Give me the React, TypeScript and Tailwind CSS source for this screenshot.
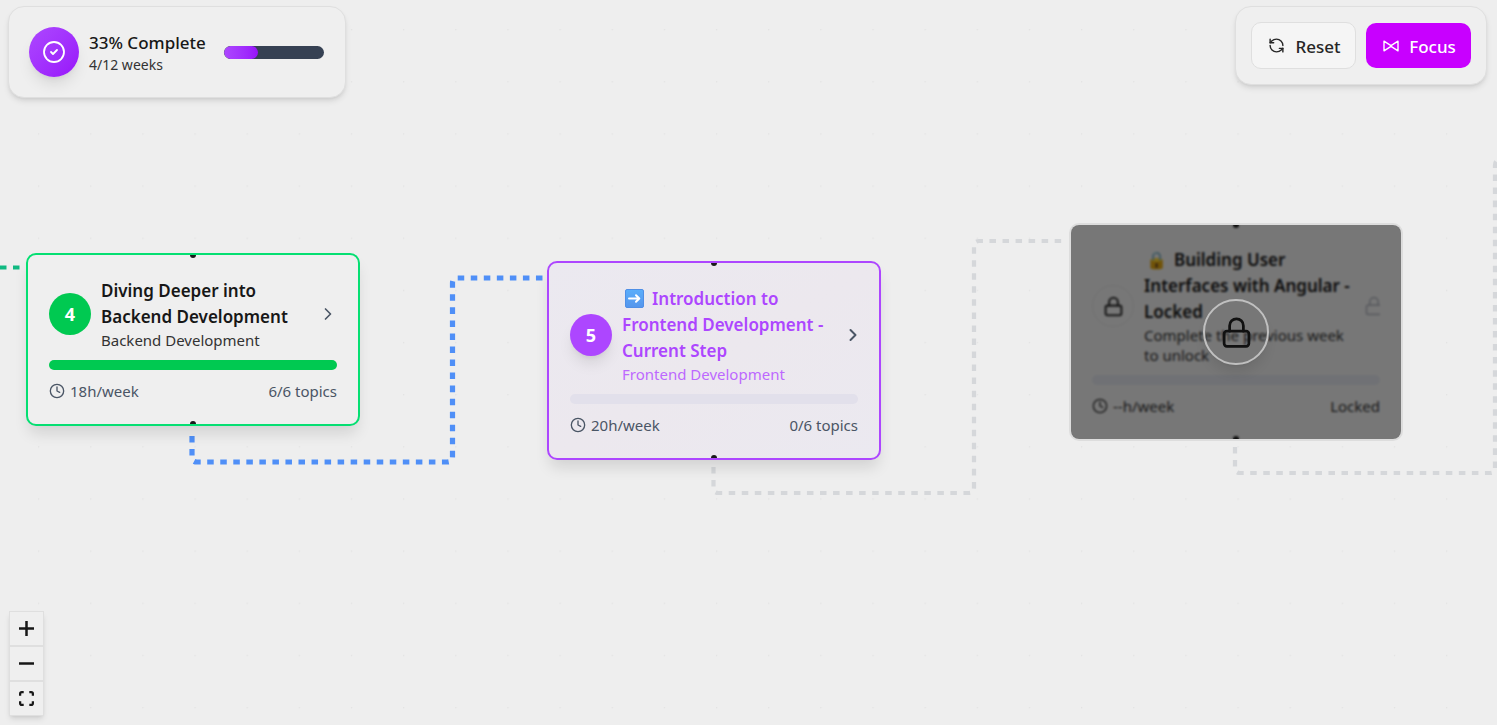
import React from "react";
import { ChevronRight, CircleCheck, Clock, Lock, RefreshCcw } from "lucide-react";

type CardProps = {
  place: string;
  frame: string;
  badge: React.ReactNode;
  title: React.ReactNode;
  titleColor: string;
  subtitle: string;
  subtitleColor: string;
  bar: string;
  hours: string;
  topics: string;
  metaColor: string;
  action: React.ReactNode;
  overlay?: React.ReactNode;
};

function Handle({ side }: { side: string }) {
  return <span className={`absolute left-1/2 h-[3px] w-1.5 -translate-x-1/2 bg-[#1a1a1a] ${side}`} />;
}

function WeekCard(p: CardProps) {
  return (
    <article className={`absolute w-[334px] rounded-[10px] border-2 px-[21px] pb-[23px] ${p.place} ${p.frame}`}>
      <Handle side="top-0 rounded-b-full" />
      <div className="flex items-center gap-2.5">
        {p.badge}
        <div className="min-w-0 flex-1">
          <h2 className={`text-[17px] leading-[26px] font-semibold ${p.titleColor}`}>{p.title}</h2>
          <p className={`text-[15px] leading-5 ${p.subtitleColor}`}>{p.subtitle}</p>
        </div>
        {p.action}
      </div>
      <div className={`mt-2.5 h-2.5 rounded-full ${p.bar}`} />
      <div className={`mt-[11px] flex items-center justify-between text-[15px] leading-5 ${p.metaColor}`}>
        <span className="flex items-center gap-[5px]">
          <Clock size={16} strokeWidth={2} />
          {p.hours}
        </span>
        <span>{p.topics}</span>
      </div>
      <Handle side="bottom-0 rounded-t-full" />
      {p.overlay}
    </article>
  );
}

function Canvas() {
  return (
    <svg className="absolute inset-0 h-full w-full" fill="none" aria-hidden="true">
      <defs>
        <pattern id="dots" x="38" y="29" width="52.15" height="52.15" patternUnits="userSpaceOnUse">
          <circle cx="0.7" cy="0.7" r="0.7" fill="#e0e0e0" />
        </pattern>
      </defs>
      <rect width="100%" height="100%" fill="url(#dots)" />
      <path d="M0 267.5H26" stroke="#10b981" strokeWidth="4.2" strokeDasharray="6.5 6.5" />
      <path
        d="M192 436V457Q192 462 197 462H447Q452.5 462 452.5 457V283Q452.5 278 457 278H548"
        stroke="#4f8ff7" strokeWidth="5.2" strokeDasharray="6.52 6.52"
      />
      <g stroke="#d5d7da" strokeWidth="4.2" strokeDasharray="6.52 6.52">
        <path d="M713.5 467V488Q713.5 493 718.5 493H969Q974 493 974 488V246Q974 241 979 241H1065" />
        <path d="M1235 447V468Q1235 473 1240 473H1490Q1495 473 1495 468V165Q1495 160 1500 160H1560" />
      </g>
    </svg>
  );
}

function FocusIcon() {
  return (
    <svg width="16" height="16" viewBox="0 0 16 16" fill="none" stroke="currentColor" strokeWidth="1.4" strokeLinejoin="round">
      <path d="M1 3.2V12.8L7.2 8.8H8.8L15 12.8V3.2L8.8 7.2H7.2Z" />
    </svg>
  );
}

function ArrowTile() {
  return (
    <svg width="19" height="19" viewBox="0 0 19 19" className="mr-2 ml-[3px] inline-block align-[-3px]" role="img" aria-label="Next">
      <defs>
        <linearGradient id="tile" x1="0" y1="0" x2="0" y2="1">
          <stop offset="0" stopColor="#5aaefb" />
          <stop offset="1" stopColor="#5595ec" />
        </linearGradient>
      </defs>
      <rect x="0.5" y="0.5" width="18" height="18" rx="1.5" fill="url(#tile)" stroke="#4f8fe6" />
      <path d="M4 9.5H14M11 6.3L14.3 9.5L11 12.7" fill="none" stroke="#fff" strokeWidth="2" strokeLinecap="round" strokeLinejoin="round" />
    </svg>
  );
}

const control = "flex h-[35px] w-[35px] items-center justify-center border border-[#dfdfdf] bg-[#efefef]";

export default function App() {
  return (
    <main className="relative h-screen min-h-[725px] overflow-hidden bg-[#eeeeee] font-['Noto_Sans','Open_Sans',sans-serif] text-[#171717]">
      <Canvas />

      <WeekCard
        place="left-[26px] top-[253px] pt-[23px]"
        frame="border-[#05df72] bg-[#efefef] shadow-[0_10px_15px_-3px_rgba(0,0,0,0.12)]"
        badge={<span className="flex h-[42px] w-[42px] items-center justify-center rounded-full bg-[#00c951] text-lg font-bold text-white">4</span>}
        title="Diving Deeper into Backend Development"
        titleColor="text-[#171717]"
        subtitle="Backend Development"
        subtitleColor="text-[#333333]"
        bar="bg-[#00c951]"
        hours="18h/week"
        topics="6/6 topics"
        metaColor="text-[#4a5565]"
        action={<span className="flex w-[18px] shrink-0 justify-center text-[#4a5565]"><ChevronRight size={20} className="shrink-0" /></span>}
      />

      <WeekCard
        place="left-[547px] top-[261px] pt-[23px]"
        frame="border-[#ad46ff] bg-linear-to-br from-[#ebe9f0] via-[#ece8ee] to-[#ebe9f0] shadow-[0_10px_15px_-3px_rgba(0,0,0,0.12)]"
        badge={<span className="flex h-[42px] w-[42px] items-center justify-center rounded-full bg-[#ad46ff] text-lg font-bold text-white shadow-lg">5</span>}
        title={<><ArrowTile />Introduction to Frontend Development - Current Step</>}
        titleColor="text-[#ad46ff]"
        subtitle="Frontend Development"
        subtitleColor="text-[#bd68ff]"
        bar="bg-[#e2e0eb]"
        hours="20h/week"
        topics="0/6 topics"
        metaColor="text-[#4a5565]"
        action={<span className="flex w-2.5 shrink-0 justify-center text-[#4a5565]"><ChevronRight size={20} strokeWidth={2.4} className="shrink-0" /></span>}
      />

      <WeekCard
        place="left-[1069px] top-[223px] pt-[22px]"
        frame="border-[#dddddd] bg-[#efefef]"
        badge={<span className="flex h-[42px] w-[42px] items-center justify-center rounded-full border border-[#e0e0e0] text-[#333333]"><Lock size={21} strokeWidth={2.4} /></span>}
        title={"\u200A🔒\u2009 Building User Interfaces with Angular - Locked"}
        titleColor="text-[#171717]"
        subtitle="Complete the previous week to unlock"
        subtitleColor="text-[#333333]"
        bar="bg-[#e0e3ea]"
        hours="--h/week"
        topics="Locked"
        metaColor="text-[#333333]"
        action={<span className="w-4 shrink-0 overflow-hidden text-[#b5b8c0]"><Lock size={20} /></span>}
        overlay={
          <div className="absolute inset-0 flex items-center justify-center rounded-lg bg-black/50 backdrop-blur-[1px]">
            <span className="flex h-[66px] w-[66px] items-center justify-center rounded-full border-2 border-[#c0c0c0] text-[#111111] shadow-lg">
              <Lock size={33} />
            </span>
          </div>
        }
      />

      <div className="relative flex items-start justify-between pt-1.5 pr-2.5 pl-2">
        <section className="flex h-[92px] items-center rounded-2xl border border-[#dfdfdf] bg-[#efefef] pr-[21px] pl-5 shadow-md">
          <span className="flex h-[50px] w-[50px] items-center justify-center rounded-full bg-linear-to-br from-[#ad46ff] to-[#9810fa] text-white shadow-lg">
            <CircleCheck size={24} strokeWidth={1.8} />
          </span>
          <div className="ml-2.5 w-[135px] pt-0.5">
            <p className="text-[17px] leading-6 font-medium whitespace-nowrap">33% Complete</p>
            <p className="text-sm leading-5 text-[#333333]">4/12 weeks</p>
          </div>
          <div className="h-[13px] w-[100px] overflow-hidden rounded-full bg-[#364153]">
            <div className="h-full w-[34px] rounded-full bg-linear-to-r from-[#ad46ff] to-[#9810fa]" />
          </div>
        </section>

        <nav className="flex items-center gap-2.5 rounded-2xl border border-[#dfdfdf] bg-[#efefef] p-[15px] shadow-md">
          <button className="flex h-[47px] w-[105px] items-center justify-center gap-2.5 rounded-[10px] border border-[#dfdfdf] bg-[#f5f5f5] pl-0.5 text-[17px] font-medium text-[#262626]">
            <RefreshCcw size={17} /> <span className="pt-0.5">Reset</span>
          </button>
          <button className="flex h-[45px] w-[105px] items-center justify-center gap-2.5 rounded-[10px] bg-[#c800ff] pl-0.5 text-[17px] font-medium text-white">
            <FocusIcon /> <span className="pt-0.5">Focus</span>
          </button>
        </nav>
      </div>

      <div className="absolute bottom-[9px] left-[9px] flex flex-col shadow-md">
        <button className={control} aria-label="Zoom in">
          <svg width="15" height="15" stroke="currentColor" strokeWidth="2.5"><path d="M0 7.5H15M7.5 0V15" /></svg>
        </button>
        <button className={control} aria-label="Zoom out">
          <svg width="15" height="15" stroke="currentColor" strokeWidth="2.5"><path d="M0 7.5H15" /></svg>
        </button>
        <button className={control} aria-label="Fit view">
          <svg width="15" height="15" viewBox="0 0 16 16" fill="none" stroke="currentColor" strokeWidth="2.4"><path d="M1.2 5V3Q1.2 1.2 3 1.2H5M11 1.2H13Q14.8 1.2 14.8 3V5M14.8 11V13Q14.8 14.8 13 14.8H11M5 14.8H3Q1.2 14.8 1.2 13V11" /></svg>
        </button>
      </div>
    </main>
  );
}
